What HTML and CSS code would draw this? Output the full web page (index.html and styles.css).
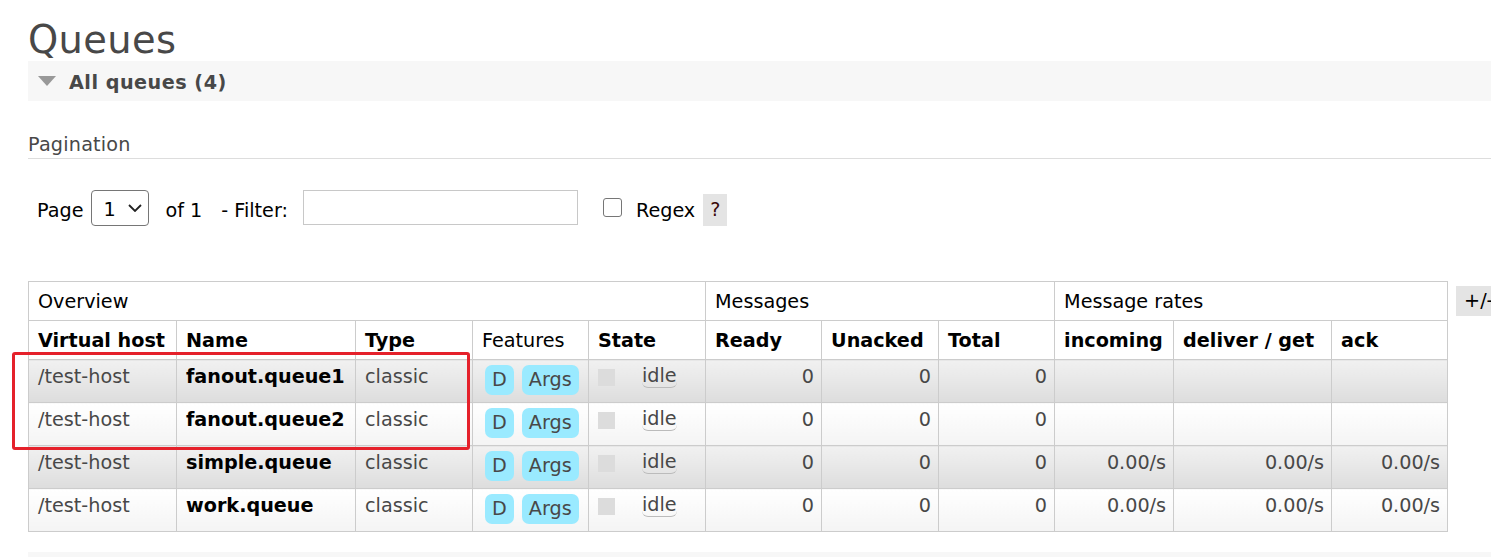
FILE: index.html
```html
<!DOCTYPE html>
<html lang="en">
<head>
<meta charset="utf-8">
<title>Queues</title>
<link rel="stylesheet" href="styles.css">
</head>
<body>
<div class="page">
  <h1 class="title">Queues</h1>
  <div class="section-head">
    <span class="tri"></span>
    <span class="section-title">All queues (4)</span>
  </div>
  <h3 class="sub">Pagination</h3>
  <div class="controls">
    <span class="lbl lbl-page">Page</span>
    <div class="select">
      <span class="sel-val">1</span>
      <svg class="chev" width="14" height="8" viewBox="0 0 14 8"><path d="M1 1 L7 7 L13 1" fill="none" stroke="#222" stroke-width="1.8"/></svg>
    </div>
    <span class="lbl lbl-of">of 1</span>
    <span class="lbl lbl-filter">- Filter:</span>
    <input class="filter" type="text">
    <input class="check" type="checkbox">
    <span class="lbl lbl-regex">Regex</span>
    <span class="help">?</span>
  </div>
  <div class="table-row">
    <table class="list">
      <colgroup>
        <col class="c-vhost"><col class="c-name"><col class="c-type"><col class="c-feat"><col class="c-state">
        <col class="c-ready"><col class="c-unacked"><col class="c-total">
        <col class="c-in"><col class="c-deliver"><col class="c-ack">
      </colgroup>
      <thead>
        <tr>
          <th class="grp" colspan="5">Overview</th>
          <th class="grp" colspan="3">Messages</th>
          <th class="grp" colspan="3">Message rates</th>
        </tr>
        <tr>
          <th>Virtual host</th>
          <th>Name</th>
          <th>Type</th>
          <th class="feat">Features</th>
          <th>State</th>
          <th>Ready</th>
          <th>Unacked</th>
          <th>Total</th>
          <th>incoming</th>
          <th>deliver / get</th>
          <th>ack</th>
        </tr>
      </thead>
      <tbody>
        <tr class="alt1">
          <td>/test-host</td>
          <td class="name">fanout.queue1</td>
          <td>classic</td>
          <td><div class="features"><span class="badge">D</span><span class="badge">Args</span></div></td>
          <td><div class="state"><span class="state-key"></span><span class="idle">idle</span></div></td>
          <td class="num">0</td>
          <td class="num">0</td>
          <td class="num">0</td>
          <td class="num"></td>
          <td class="num"></td>
          <td class="num"></td>
        </tr>
        <tr class="alt2">
          <td>/test-host</td>
          <td class="name">fanout.queue2</td>
          <td>classic</td>
          <td><div class="features"><span class="badge">D</span><span class="badge">Args</span></div></td>
          <td><div class="state"><span class="state-key"></span><span class="idle">idle</span></div></td>
          <td class="num">0</td>
          <td class="num">0</td>
          <td class="num">0</td>
          <td class="num"></td>
          <td class="num"></td>
          <td class="num"></td>
        </tr>
        <tr class="alt1">
          <td>/test-host</td>
          <td class="name">simple.queue</td>
          <td>classic</td>
          <td><div class="features"><span class="badge">D</span><span class="badge">Args</span></div></td>
          <td><div class="state"><span class="state-key"></span><span class="idle">idle</span></div></td>
          <td class="num">0</td>
          <td class="num">0</td>
          <td class="num">0</td>
          <td class="num">0.00/s</td>
          <td class="num">0.00/s</td>
          <td class="num">0.00/s</td>
        </tr>
        <tr class="alt2">
          <td>/test-host</td>
          <td class="name">work.queue</td>
          <td>classic</td>
          <td><div class="features"><span class="badge">D</span><span class="badge">Args</span></div></td>
          <td><div class="state"><span class="state-key"></span><span class="idle">idle</span></div></td>
          <td class="num">0</td>
          <td class="num">0</td>
          <td class="num">0</td>
          <td class="num">0.00/s</td>
          <td class="num">0.00/s</td>
          <td class="num">0.00/s</td>
        </tr>
      </tbody>
    </table>
    <span class="toggle">+/-</span>
  </div>
  <div class="section-head bottom"></div>
  <div class="highlight"></div>
</div>
</body>
</html>
```
FILE: styles.css
```css
html, body {
  margin: 0;
  padding: 0;
  overflow: hidden;
  background: #fff;
}
body {
  font-family: "DejaVu Sans", Verdana, sans-serif;
  font-size: 19.2px;
  line-height: 23px;
  color: #484848;
}
.page {
  position: relative;
  padding-left: 28px;
}
.title {
  margin: 0;
  padding-top: 17px;
  height: 44px;
  font-size: 38.4px;
  font-weight: normal;
  line-height: normal;
  color: #484848;
  letter-spacing: 0.4px;
}
.section-head {
  height: 40px;
  background: #f7f7f7;
  display: flex;
  align-items: center;
  padding-left: 10px;
}
.tri {
  width: 0;
  height: 0;
  border-left: 9.5px solid transparent;
  border-right: 9.5px solid transparent;
  border-top: 10px solid #999;
  margin-right: 13px;
}
.section-title {
  font-weight: bold;
  color: #484848;
  padding-top: 2px;
  letter-spacing: 0.5px;
}
.sub {
  margin: 32px 0 0;
  padding-bottom: 2px;
  font-size: 19.2px;
  font-weight: normal;
  line-height: 23px;
  border-bottom: 1px solid #ddd;
  color: #484848;
  letter-spacing: 0.2px;
}
.controls {
  display: flex;
  align-items: center;
  margin-top: 30px;
  height: 37px;
}
.lbl {
  color: #000;
  padding-top: 5px;
  white-space: nowrap;
}
.lbl-page { margin-left: 9px; }
.select {
  margin-left: 8px;
  width: 58px;
  height: 36px;
  box-sizing: border-box;
  border: 1px solid #767676;
  border-radius: 4px;
  display: flex;
  align-items: center;
  padding-left: 11px;
  color: #000;
}
.sel-val { padding-top: 4px; }
.chev { margin-left: 12px; }
.lbl-of { margin-left: 16px; }
.lbl-filter { margin-left: 19px; }
.filter {
  margin: 0 0 0 15px;
  width: 275px;
  height: 35px;
  box-sizing: border-box;
  border: 1px solid #c8c8c8;
  border-radius: 0;
  padding: 0 6px;
  font: inherit;
  background: #fff;
}
.check {
  appearance: none;
  -webkit-appearance: none;
  margin: 0 0 0 25px;
  width: 19px;
  height: 19px;
  box-sizing: border-box;
  border: 1.5px solid #767676;
  border-radius: 3px;
  background: #fff;
}
.lbl-regex { margin-left: 14px; }
.help {
  margin-left: 8px;
  margin-top: 4px;
  width: 24px;
  height: 32px;
  background: #e4e4e4;
  color: #3a0a0a;
  display: flex;
  align-items: center;
  justify-content: center;
}
.table-row {
  display: flex;
  align-items: flex-start;
  margin-top: 55px;
}
.list {
  flex: none;
  border-collapse: collapse;
  table-layout: fixed;
  width: 1420px;
  border: 1px solid #ccc;
}
.c-vhost { width: 148px; }
.c-name { width: 179px; }
.c-type { width: 117px; }
.c-feat { width: 116px; }
.c-state { width: 117px; }
.c-ready { width: 116px; }
.c-unacked { width: 117px; }
.c-total { width: 116px; }
.c-in { width: 119px; }
.c-deliver { width: 158px; }
.c-ack { width: 116px; }
.list th,
.list td {
  border: 1px solid #ccc;
  text-align: left;
  vertical-align: top;
  white-space: nowrap;
  overflow: visible;
}
.list th {
  padding: 8px 8px 7px 9px;
  color: #000;
  font-weight: bold;
  background: #fff;
}
.list th.grp,
.list th.feat {
  font-weight: normal;
}
.list td {
  padding: 5px 8px 7px 9px;
  color: #484848;
}
.list td.name {
  font-weight: bold;
  color: #000;
}
.list td.num {
  text-align: right;
  padding-right: 7px;
}
.alt1 td {
  background: linear-gradient(to bottom, #f1f1f1, #dddddd);
}
.alt2 td {
  background: linear-gradient(to bottom, #ffffff, #f4f4f4);
}
.features {
  display: flex;
  gap: 8px;
  padding-left: 3px;
}
.badge {
  display: inline-block;
  height: 30px;
  line-height: 30px;
  padding: 0 7px;
  background: #9aeaff;
  border-radius: 7px;
  color: #484848;
}
.state {
  display: flex;
  align-items: flex-start;
}
.state-key {
  width: 17px;
  height: 17px;
  margin-top: 4px;
  background: #dcdcdc;
}
.idle {
  margin-left: 27px;
  line-height: 22px;
  border-bottom: 1px solid #bbb;
  border-radius: 0 0 6px 6px;
}
.toggle {
  flex: none;
  margin-left: 8px;
  margin-top: 5px;
  height: 30px;
  line-height: 30px;
  padding: 0 8px;
  background: #e4e4e4;
  color: #000;
  white-space: nowrap;
}
.section-head.bottom {
  margin-top: 20px;
}
.highlight {
  position: absolute;
  left: 12px;
  top: 352px;
  width: 458px;
  height: 98px;
  box-sizing: border-box;
  border: 3.5px solid #e5212b;
  border-radius: 3px;
}
```
